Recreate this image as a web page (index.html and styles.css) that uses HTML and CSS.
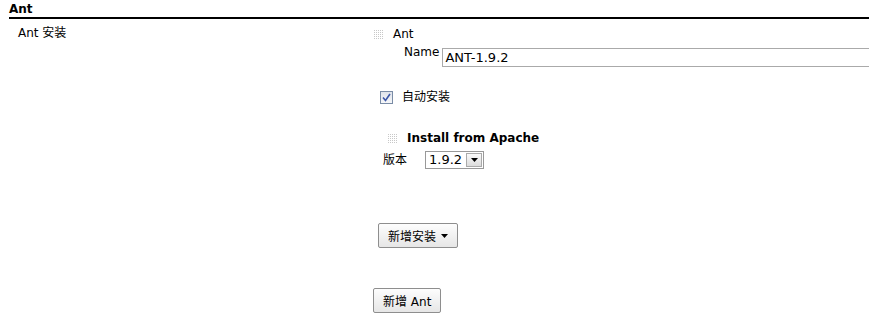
FILE: index.html
```html
<!DOCTYPE html>
<html>
<head>
<meta charset="utf-8">
<link rel="stylesheet" href="styles.css">
</head>
<body>
<div class="section-header">Ant</div>
<div class="row">
  <div class="label">Ant 安装</div>
  <div class="content">
    <div class="chunk">
      <div class="chunk-head"><span class="handle"></span><span>Ant</span></div>
      <div class="field">
        <span class="field-label name-label">Name</span>
        <input class="text-input" type="text" value="ANT-1.9.2">
      </div>
      <label class="check-row">
        <span class="checkbox"><svg width="9" height="9" viewBox="0 0 9 9"><path d="M1 4.5 L3.5 7.5 L8 1" fill="none" stroke="#3b56a8" stroke-width="1.6"/></svg></span>
        <span>自动安装</span>
      </label>
      <div class="installer">
        <div class="chunk-head bold"><span class="handle"></span><span>Install from Apache</span></div>
        <div class="version-row">
          <span class="field-label version-label">版本</span>
          <span class="select"><span class="select-val">1.9.2</span><span class="select-btn"><svg width="7" height="4" viewBox="0 0 7 4"><path d="M0 0 H7 L3.5 4 Z" fill="#000"/></svg></span></span>
        </div>
      </div>
      <div class="add-install">
        <button class="btn">新增安装 <svg width="7" height="4" viewBox="0 0 7 4"><path d="M0 0 H7 L3.5 4 Z" fill="#000"/></svg></button>
      </div>
    </div>
    <div class="add-ant">
      <button class="btn">新增 Ant</button>
    </div>
  </div>
</div>
</body>
</html>
```
FILE: styles.css
```css
html, body {
  margin: 0;
  padding: 0;
  background: #fff;
}
body {
  font-family: "DejaVu Sans", "Noto Sans CJK SC", sans-serif;
  font-size: 12px;
  color: #000;
  overflow: hidden;
}
.section-header {
  margin-left: 9px;
  padding-top: 2px;
  font-weight: bold;
  line-height: 14px;
  border-bottom: 2px solid #000;
  height: 15px;
}
.row {
  display: grid;
  grid-template-columns: 373px 1fr;
}
.label {
  padding-left: 18px;
  padding-top: 7px;
  line-height: 15px;
}
.content {
  padding-top: 8px;
}
.chunk-head {
  display: flex;
  align-items: center;
  gap: 9px;
  padding-left: 1px;
  line-height: 15px;
}
.handle {
  width: 10px;
  height: 10px;
  background-image:
    linear-gradient(90deg, transparent 1px, #fff 1px),
    linear-gradient(transparent 1px, #fff 1px);
  background-color: #c8c8c8;
  background-size: 2px 2px;
}
.field {
  display: flex;
  align-items: flex-start;
  padding-left: 31px;
  margin-top: 3px;
}
.field-label {
  line-height: 15px;
}
.name-label {
  margin-right: 3px;
}
.text-input {
  flex: 1;
  margin: 3px -10px 0 0;
  height: 19px;
  box-sizing: border-box;
  border: 1px solid #aaa;
  padding: 1px 2px;
  font-family: inherit;
  font-size: 13px;
  outline: none;
}
.check-row {
  display: flex;
  align-items: center;
  gap: 9px;
  margin: 23px 0 0 7px;
  line-height: 15px;
}
.checkbox {
  width: 11px;
  height: 11px;
  border: 1px solid #7a8ca6;
  background: linear-gradient(#dfe3ea, #f6f7f9);
  display: flex;
  align-items: center;
  justify-content: center;
}
.installer {
  margin: 26px 0 0 14px;
}
.bold {
  font-weight: bold;
  font-size: 12px;
}
.version-row {
  display: flex;
  align-items: center;
  margin-top: 5px;
  margin-left: -4px;
}
.version-label {
  margin-right: 18px;
}
.select {
  display: flex;
  align-items: stretch;
  height: 18px;
  border: 1px solid #999;
  box-sizing: border-box;
  width: 59px;
}
.select-val {
  flex: 1;
  padding-left: 3px;
  font-size: 13px;
  line-height: 16px;
  color: #000;
}
.select-btn {
  width: 14px;
  margin: 1px;
  border: 1px solid #aaa;
  background: linear-gradient(#fafafa, #dcdcdc);
  display: flex;
  align-items: center;
  justify-content: center;
}
.btn {
  font-family: inherit;
  font-size: 12px;
  height: 25px;
  padding: 0 9px;
  border: 1px solid #8e8e8e;
  border-radius: 2px;
  background: linear-gradient(#fdfdfd, #e6e6e6);
  color: #000;
  display: inline-flex;
  align-items: center;
  gap: 5px;
}
.add-install {
  margin: 54px 0 0 5px;
}
.add-ant {
  margin-top: 40px;
}
```
